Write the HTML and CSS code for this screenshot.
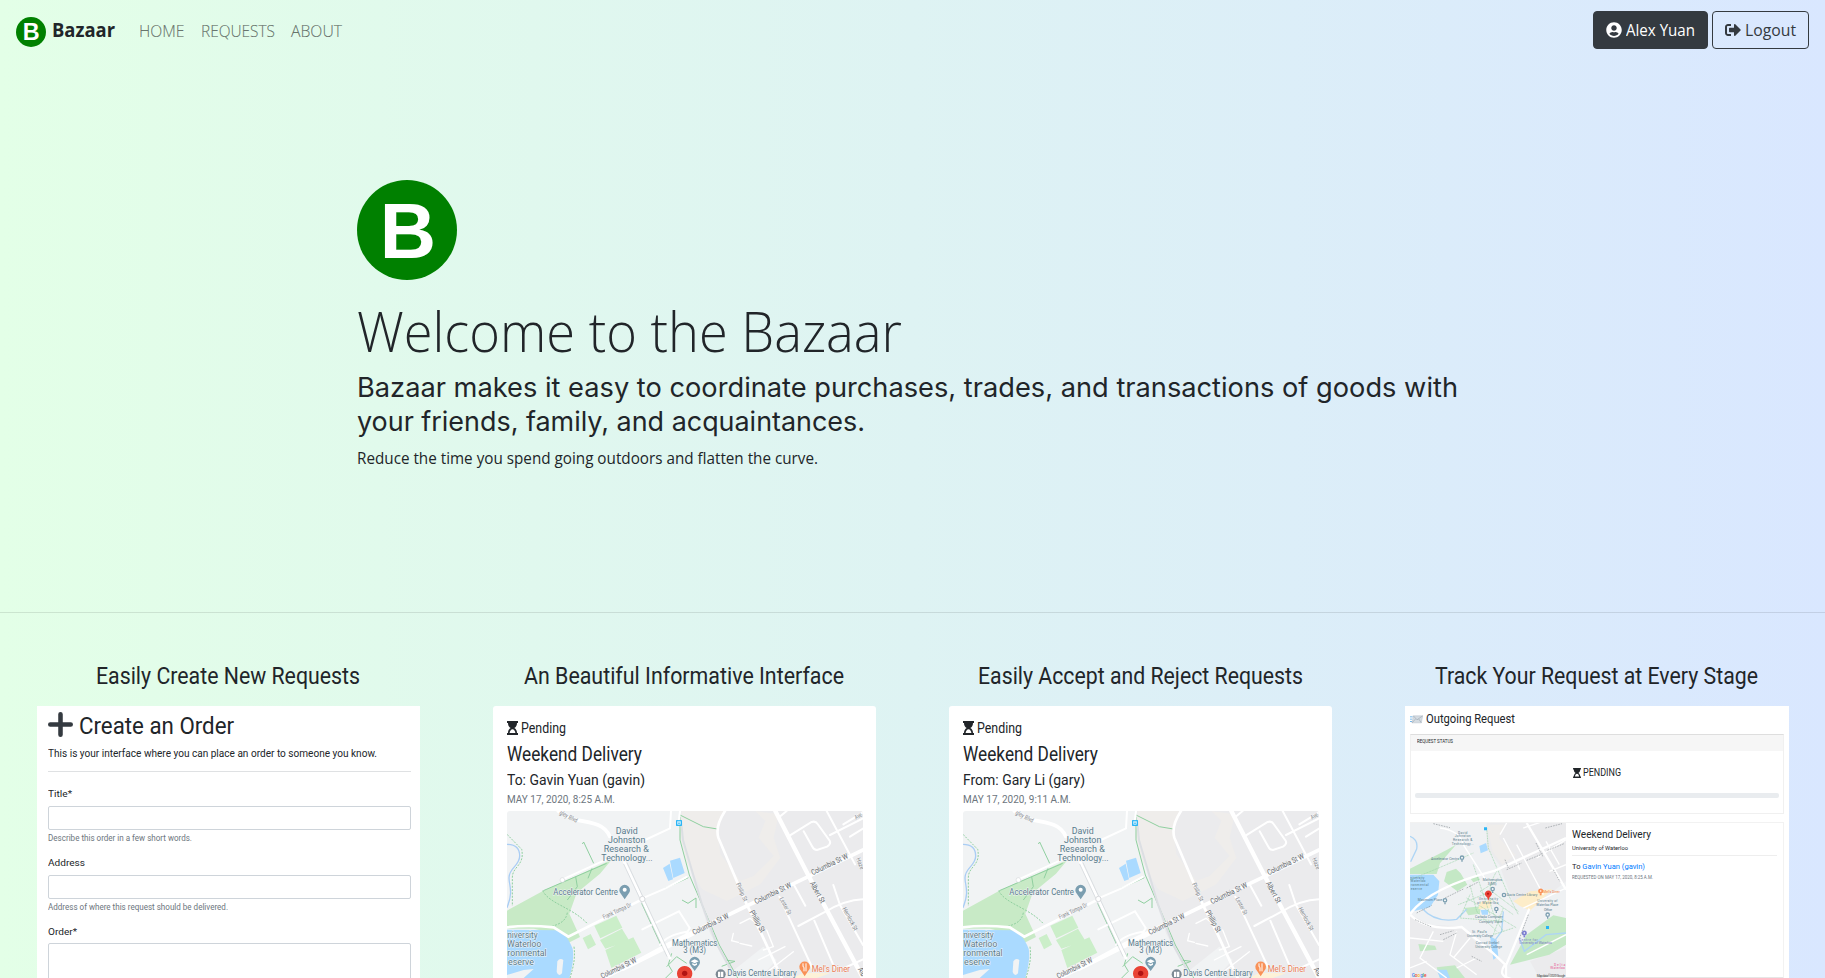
FILE: index.html
```html
<!DOCTYPE html>
<html lang="en">
<head>
<meta charset="utf-8">
<title>Bazaar</title>
<link rel="stylesheet" href="styles.css">
</head>
<body>
<nav class="navbar">
  <svg class="brand-logo" viewBox="0 0 100 100"><circle cx="50" cy="50" r="50" fill="green"/><text x="51" y="77" text-anchor="middle" class="logo-b">B</text></svg>
  <span class="brand"><span data-w="63">Bazaar</span></span>
  <a class="nav-link"><span data-w="45.500">HOME</span></a>
  <a class="nav-link"><span data-w="74">REQUESTS</span></a>
  <a class="nav-link"><span data-w="51">ABOUT</span></a>
  <div class="nav-actions">
    <a class="btn btn-dark"><svg class="btn-icon" viewBox="0 0 496 512"><path fill="currentColor" d="M248 8C111 8 0 119 0 256s111 248 248 248 248-111 248-248S385 8 248 8zm0 96c48.600 0 88 39.400 88 88s-39.400 88-88 88-88-39.400-88-88 39.400-88 88-88zm0 344c-58.700 0-111.300-26.600-146.500-68.200 18.800-35.400 55.600-59.800 98.500-59.800 2.400 0 4.800.4 7.100 1.100 13 4.200 26.600 6.900 40.900 6.900s28-2.700 40.900-6.900c2.300-.7 4.700-1.100 7.100-1.100 42.900 0 79.700 24.400 98.500 59.800C359.300 421.400 306.700 448 248 448z"/></svg><span data-w="69">Alex Yuan</span></a>
    <a class="btn btn-outline"><svg class="btn-icon" viewBox="0 0 512 512"><path fill="currentColor" d="M497 273L329 441c-15 15-41 4.500-41-17v-96H152c-13.300 0-24-10.700-24-24v-96c0-13.300 10.700-24 24-24h136V88c0-21.400 25.900-32 41-17l168 168c9.300 9.400 9.300 24.600 0 34zM192 436v-40c0-6.600-5.400-12-12-12H96c-17.700 0-32-14.300-32-32V160c0-17.700 14.300-32 32-32h84c6.600 0 12-5.400 12-12V76c0-6.600-5.400-12-12-12H96c-53 0-96 43-96 96v192c0 53 43 96 96 96h84c6.600 0 12-5.400 12-12z"/></svg><span data-w="51">Logout</span></a>
  </div>
</nav>

<header class="hero">
  <svg class="hero-logo" viewBox="0 0 100 100"><circle cx="50" cy="50" r="50" fill="green"/><text x="51" y="78" text-anchor="middle" class="logo-b">B</text></svg>
  <h1><span data-w="545">Welcome to the Bazaar</span></h1>
  <h2><span data-w="1101">Bazaar makes it easy to coordinate purchases, trades, and transactions of goods with</span><br><span data-w="508">your friends, family, and acquaintances.</span></h2>
  <p><span data-w="461">Reduce the time you spend going outdoors and flatten the curve.</span></p>
</header>

<main class="features">
  <section class="feature">
    <h3><span data-w="264">Easily Create New Requests</span></h3>
    <div class="shot form-shot">
      <div class="form-title"><svg class="plus" viewBox="0 0 22 22"><path d="M11 2v18M2 11h18" stroke="#343a40" stroke-width="4" stroke-linecap="round"/></svg><span data-w="155">Create an Order</span></div>
      <div class="form-sub"><span data-w="329">This is your interface where you can place an order to someone you know.</span></div>
      <div class="form-rule"></div>
      <div class="label"><span data-w="24">Title*</span></div>
      <div class="input"></div>
      <div class="help"><span data-w="144">Describe this order in a few short words.</span></div>
      <div class="label"><span data-w="37">Address</span></div>
      <div class="input"></div>
      <div class="help"><span data-w="180">Address of where this request should be delivered.</span></div>
      <div class="label"><span data-w="29">Order*</span></div>
      <div class="input area"></div>
    </div>
  </section>

  <section class="feature">
    <h3><span data-w="320">An Beautiful Informative Interface</span></h3>
    <div class="shot card-shot">
      <div class="status"><svg class="hourglass" viewBox="0 0 11 14"><path fill="#212529" d="M0 0h11v2h-1c0 2.500-1 4-2.700 5C9 8 10 9.500 10 12h1v2H0v-2h1c0-2.500 1-4 2.700-5C2 6 1 4.500 1 2H0z"/><path fill="#fff" d="M2.600 12c.3-2 1.300-3.800 2.900-3.800S8.100 10 8.400 12z"/></svg><span data-w="45">Pending</span></div>
      <div class="card-title"><span data-w="135">Weekend Delivery</span></div>
      <div class="person"><span data-w="138">To: Gavin Yuan (gavin)</span></div>
      <div class="date"><span data-w="108">MAY 17, 2020, 8:25 A.M.</span></div>
      <div class="map-slot">
        <svg class="map" id="map" viewBox="81 513 1068 501">
          <rect x="81" y="513" width="1068" height="501" fill="#f1f3f4"/>
          <path fill="#ebebed" d="M600 513h549v501H760L690 880 640 720 604 600z"/>
          <path fill="#efedeb" d="M606 513h125l-18 60 8 70 60 80 40-15 60-60-45-55 20-50-30-30 70 10-15 70 20 60-60 80-100 50-75-35-45-80-23-80z"/>
          <path fill="#f1f3f4" d="M690 900l60 100 100-80 40 40-50 54H740z"/>
          <path fill="#fdf2d8" d="M940 1014l30-16 80 2-40 14z"/>
          <path fill="#c8eac6" d="M81 812L190 752l130-58 75-35-35 42-70 58-22 62 32 70-40 20-38-30-60-15H81z"/>
          <path fill="#cbeec9" d="M343 857l66-30 18 36-66 32zM360 900l66-34 22 36-72 24zM376 930l84-38 24 46-90 46zM308 894l24-12 16 32-24 14z"/>
          <path fill="#aadaff" d="M81 869l145 2c25 5 40 25 52 55 5 20-2 65-10 88H81zM549 684l20-13 10 47-14 5zM570 662l30-9 14 46-34 15z"/>
          <path fill="#f1f3f4" d="M232 964q8-12 18-4l-4 40q-10 12-16-4zM81 1005l50-15 30-3-30 27H81z"/>
          <path fill="none" stroke="#aacdf4" stroke-width="4" d="M81 613c26 0 38 12 38 35 0 30-32 35-32 65 0 25 14 40-6 90"/>
          <g fill="none" stroke="#8fcf9f" stroke-width="3">
            <path stroke-dasharray="6 4" d="M81 583l44 45c10 50-28 50-28 85v85M188 752c20 40 90 50 135 100M262 818c-5 30-30 35-48 42M282 920c5 40-4 65-12 94"/>
            <path d="M190 752l190-82M262 780l30-40-5-30M324 715l12-30M341 670l-30-64-4 6M485 790l60 130M600 530v70l28 105 90 210 55 99M600 525l70 35 42 7M555 745l70-32M606 780l18 10 24-16v30M575 940l-10 34 12 20-20 20M735 960l30 4-40 15M560 980l30-30 30 20"/>
          </g>
          <path fill="none" stroke="#dcdfe3" stroke-width="6" d="M603 540l6 60 56 190 44 120 44 80"/>
          <g fill="none" stroke="#fff" stroke-linecap="round">
            <path stroke-width="11" d="M235 513l50 26c60 10 90 16 104 50M1149 630L980 712 800 798 570 910 460 970 370 1014"/>
            <path stroke-width="13" d="M640 880l-90 46-120 60M886 513l100 195 115 215 48 91"/>
            <path stroke-width="8" d="M430 660l55 115 85 180M735 513q-30 45-20 80l85 200 45 90 60 131M81 862q60-8 140 0l44 28 220-111"/>
            <path stroke-width="6" d="M248 718l145-66M485 776l70-30 65-35M495 600l75-35 3-52M600 513l-3 25M540 915q20-30 80-40M487 868l110-54 32 50-12 22M930 586l65-40q12-4 18 6l36 50q5 10-8 18l-30 10q-10 0-14-10l-26-46M1040 513l85 160M1050 585l99-50M955 858l80-42q60-36 114-38M898 770l102 220M942 735l34 62M1003 842l60 140M1060 735l20 60 69 120M1080 990l69-32M920 513l-22 18M1110 590l39-24M1090 553l59-36"/>
            <path stroke-width="4" d="M850 1005l90-70M835 960l80-40M780 850l30-15 10 8M860 870l20 50-30 10M760 880l-5 22 20 5M780 910l35 8"/>
          </g>
          <path fill="none" stroke="#cfd3d8" stroke-width="2" d="M431 672l130 278M441 668l130 278"/>
          <circle cx="487" cy="777" r="8" fill="#fff" stroke="#d8dadd" stroke-width="3"/>
          <circle cx="247" cy="720" r="7" fill="#fff" stroke="#d8dadd" stroke-width="2"/>
          <g class="street">
            <text transform="translate(237 522) rotate(27)" textLength="58" lengthAdjust="spacingAndGlyphs">gley Blvd</text>
            <text transform="translate(372 838) rotate(-25)" textLength="92" lengthAdjust="spacingAndGlyphs">Frank Tompa Dr</text>
            <text transform="translate(768 732) rotate(66)" textLength="58" lengthAdjust="spacingAndGlyphs">Phillip St</text>
            <text transform="translate(898 776) rotate(62)" textLength="56" lengthAdjust="spacingAndGlyphs">Lester St</text>
            <text transform="translate(1087 806) rotate(62)" textLength="76" lengthAdjust="spacingAndGlyphs">Hemlock St</text>
            <text transform="translate(1128 656) rotate(68)" textLength="36" lengthAdjust="spacingAndGlyphs">Haze</text>
            <text transform="translate(1128 539) rotate(-28)" textLength="22" lengthAdjust="spacingAndGlyphs">Ave</text>
          </g>
          <g class="street major">
            <text transform="translate(998 706) rotate(-26)" textLength="120" lengthAdjust="spacingAndGlyphs">Columbia St W</text>
            <text transform="translate(828 793) rotate(-26)" textLength="120" lengthAdjust="spacingAndGlyphs">Columbia St W</text>
            <text transform="translate(642 885) rotate(-26)" textLength="118" lengthAdjust="spacingAndGlyphs">Columbia St W</text>
            <text transform="translate(367 1016) rotate(-26)" textLength="116" lengthAdjust="spacingAndGlyphs">Columbia St W</text>
            <text transform="translate(808 816) rotate(61)" textLength="72" lengthAdjust="spacingAndGlyphs">Phillip St</text>
            <text transform="translate(989 730) rotate(61)" textLength="70" lengthAdjust="spacingAndGlyphs">Albert St</text>
            <text transform="translate(1133 988) rotate(61)" textLength="26" lengthAdjust="spacingAndGlyphs">Alb</text>
          </g>
          <g class="place" text-anchor="middle">
            <text x="440" y="581" textLength="66" lengthAdjust="spacingAndGlyphs">David</text>
            <text x="440" y="608" textLength="112" lengthAdjust="spacingAndGlyphs">Johnston</text>
            <text x="439" y="635" textLength="135" lengthAdjust="spacingAndGlyphs">Research &amp;</text>
            <text x="441" y="662" textLength="154" lengthAdjust="spacingAndGlyphs">Technology...</text>
          </g>
          <g class="place">
            <text x="220" y="765" textLength="194" lengthAdjust="spacingAndGlyphs">Accelerator Centre</text>
            <text x="82" y="895" textLength="91" lengthAdjust="spacingAndGlyphs">niversity</text>
            <text x="82" y="922" textLength="102" lengthAdjust="spacingAndGlyphs">Waterloo</text>
            <text x="82" y="949" textLength="118" lengthAdjust="spacingAndGlyphs">ronmental</text>
            <text x="84" y="976" textLength="78" lengthAdjust="spacingAndGlyphs">eserve</text>
            <text x="576" y="917" textLength="136" lengthAdjust="spacingAndGlyphs">Mathematics</text>
            <text x="610" y="940" textLength="68" lengthAdjust="spacingAndGlyphs">3 (M3)</text>
            <text x="742" y="1008" textLength="208" lengthAdjust="spacingAndGlyphs">Davis Centre Library</text>
            <text class="food" x="995" y="996" textLength="115" lengthAdjust="spacingAndGlyphs">Mel's Diner</text>
          </g>
          <path fill="#7b9eb0" d="M434 778l-11-16a16 16 0 1 1 22 0z"/><circle cx="434" cy="749" r="6" fill="#fff"/>
          <path fill="#7b9eb0" d="M644 993l-11-15a16 16 0 1 1 22 0z"/><path fill="#fff" d="M632 964l12-6 12 6-12 6zM637 969l7 4 7-4v5l-7 4-7-4z"/>
          <circle cx="722" cy="1003" r="15" fill="#7d8a94"/><path d="M714 995h7v16h-7zM723 995h7v16h-7z" fill="#fff"/>
          <path fill="#f99157" d="M974 1009l-12-18a16 16 0 1 1 24 0z"/><path d="M969 970v8q0 4 3 4v12M978 970v24" stroke="#fff" stroke-width="3" fill="none"/>
          <path fill="#e94335" d="M614 1060l-20-48a23 23 0 1 1 40 0z"/><circle cx="614" cy="1000" r="8" fill="#b11313"/>
          <rect x="588" y="540" width="18" height="18" rx="2" fill="#2bb5f5"/><path d="M593 544h8v9h-8zM593 548h8" stroke="#fff" stroke-width="2" fill="none"/>
        </svg>
      </div>
    </div>
  </section>

  <section class="feature">
    <h3><span data-w="325">Easily Accept and Reject Requests</span></h3>
    <div class="shot card-shot">
      <div class="status"><svg class="hourglass" viewBox="0 0 11 14"><path fill="#212529" d="M0 0h11v2h-1c0 2.500-1 4-2.700 5C9 8 10 9.500 10 12h1v2H0v-2h1c0-2.500 1-4 2.700-5C2 6 1 4.500 1 2H0z"/><path fill="#fff" d="M2.600 12c.3-2 1.300-3.800 2.900-3.800S8.100 10 8.400 12z"/></svg><span data-w="45">Pending</span></div>
      <div class="card-title"><span data-w="135">Weekend Delivery</span></div>
      <div class="person"><span data-w="122">From: Gary Li (gary)</span></div>
      <div class="date"><span data-w="108">MAY 17, 2020, 9:11 A.M.</span></div>
      <div class="map-slot" data-copy="map"></div>
    </div>
  </section>

  <section class="feature">
    <h3><span data-w="323">Track Your Request at Every Stage</span></h3>
    <div class="shot track-shot">
      <div class="track-title"><svg class="mail" viewBox="0 0 39 26"><path d="M0 5h8M0 12h6M0 19h6" stroke="#5aa9e6" stroke-width="2.500"/><path d="M10 2h28l-4 21H6z" fill="#d5dce2" stroke="#b4bfc8" stroke-width="1.500"/><path d="M10 2l11 12L38 2M6 23l11-12M34 23l-8-12" fill="none" stroke="#8e9ba6" stroke-width="1.500"/></svg><span data-w="89">Outgoing Request</span></div>
      <div class="panel">
        <div class="panel-head"><span data-w="36">REQUEST STATUS</span></div>
        <div class="panel-status"><svg class="hourglass" viewBox="0 0 11 14"><path fill="#212529" d="M0 0h11v2h-1c0 2.500-1 4-2.700 5C9 8 10 9.500 10 12h1v2H0v-2h1c0-2.500 1-4 2.700-5C2 6 1 4.500 1 2H0z"/><path fill="#fff" d="M2.600 12c.3-2 1.300-3.800 2.900-3.800S8.100 10 8.400 12z"/></svg><span data-w="38">PENDING</span></div>
        <div class="progress"></div>
      </div>
      <div class="detail">
        <svg class="mini-map" viewBox="60 545 468 465">
          <rect x="60" y="545" width="468" height="465" fill="#eff1f3"/>
          <path fill="#ebebed" d="M290 545h238v175l-100 80-60-20-40-110-38-50z"/>
          <path fill="#efedeb" d="M292 550h50l-15 40 50 50-40 30-30-40z"/>
          <path fill="#ebebed" d="M60 820l60 30 90 5 50 50 90 60v45H60zM420 960l108-40v90h-80z"/>
          <path fill="#c4e8c5" d="M60 682l110-56 28-16-48 56-10 32H60zM170 692l28-10 14 14 20 34-30 20-40-30zM360 970l50-90 80-58 38 8v80l-50 30-70 18zM85 908l50 5 5 12-50 5zM222 800l50-5-2 22-35 5zM140 978l55-6 30 38h-75zM240 710l22-10 8 15-20 8z"/>
          <path fill="#aadaff" d="M60 700h70l18 20-4 40-24 38-60 14zM268 614l20-9 6 22-22 9zM300 885l20 10 5 50-15 10zM140 985h30l10 25h-30zM272 806h22v14h-18z"/>
          <path fill="#fdedc9" d="M370 780l50-30 66-6-30 30-36 34-30-14zM270 782l35-5-5 24-35 2z"/>
          <g fill="none" stroke="#aed5f5" stroke-width="4"><path d="M60 585q25 10 20 38l-18 38M95 800q40 45 105 34l30-30M528 875l-60 5-65 50-15-40M340 810l-5 60-30 40"/></g>
          <g fill="none" stroke="#8fcf9f" stroke-width="2" stroke-dasharray="3 2"><path d="M290 560l5 60 60 140 30 60M240 730l20 80 60 60M320 720l-50 30 100 70M230 770l150 90M205 790l100-40 80 60M340 800l-30 80 60-20M250 670l50 150M60 715q100-40 190-80M320 690q-50 80 20 180M240 760l-30 70 130 10"/></g>
          <g fill="none" stroke="#fff">
            <path stroke-width="7" d="M60 818q60-80 255-130L528 590M60 820q50 50 155 37l90 75 43 40v38M348 972l70-170M410 545l118 200M345 970q-50 70 180 33"/>
            <path stroke-width="4" d="M150 560q60 8 70 50l70 110M340 590l50 95M330 580l20-35M440 650l88-55M400 560l60-20M380 610l80 150M130 870l-40 80 80 60M200 870l-20 70 80 60M60 890l100 10M110 960l-50 20M240 890l-50 60M260 950l-60 30M468 600l40 70M478 690l50-20M400 800l128-60M410 940l118-60"/>
          </g>
          <g fill="none" stroke="#8e9499" stroke-width="2" stroke-dasharray="5 3"><path d="M80 815l45-23M165 770l55-27M230 740l35-18M350 685l45-20M410 657l50-20M472 627l50-20M438 605l20 40M490 685l20 36M345 655l10 25M415 820l-28 75M75 835l50 22M150 880l40-12M160 895l40-20M245 945l30 15M130 547l50 12M466 560l50-13"/></g>
          <g class="mini-label" text-anchor="middle">
            <text x="218" y="577" textLength="28">David</text><text x="218" y="588" textLength="48">Johnston</text><text x="218" y="600" textLength="58">Research &amp;</text><text x="218" y="612" textLength="66">Technology...</text>
            <text x="165" y="655" textLength="84">Accelerator Centre</text>
            <text x="82" y="712" textLength="42">niversity</text><text x="84" y="723" textLength="45">Waterloo</text><text x="89" y="735" textLength="54">ronmental</text><text x="79" y="746" textLength="34">eserve</text>
            <text x="120" y="780" textLength="74">Maximum Place</text>
            <text x="307" y="720" textLength="58">Mathematics</text><text x="306" y="731" textLength="26">3 (M3)</text>
            <text x="396" y="763" textLength="92">Davis Centre Library</text>
            <text x="295" y="777" textLength="58">University</text><text x="293" y="789" textLength="64">of Waterloo</text>
            <text x="297" y="829" textLength="84">Canada Computer</text><text x="302" y="845" textLength="70">Company Store</text>
            <text x="472" y="782" textLength="60">University of</text><text x="472" y="793" textLength="66">Waterloo Place</text><text x="474" y="808" textLength="24">Office</text>
            <text x="268" y="875" textLength="44">St. Paul's</text><text x="270" y="886" textLength="78">University College</text>
            <text x="292" y="908" textLength="70">Conrad Grebel</text><text x="296" y="919" textLength="80">University College</text>
            <text x="485" y="755" textLength="50" fill="#f07b3c">Mel's Diner</text>
            <text x="415" y="898" textLength="56" fill="#7577c2">Centre for</text><text x="437" y="909" textLength="98" fill="#7577c2">University of Waterloo</text>
            <text x="509" y="974" textLength="34" fill="#e75590">Delta</text><text x="503" y="984" textLength="44" fill="#e75590">Waterloo</text>
            <text x="483" y="1006" textLength="86" fill="#444">Map data ©2020 Google</text>
          </g>
          <text class="google" x="65" y="1006"><tspan fill="#4285f4">G</tspan><tspan fill="#ea4335">o</tspan><tspan fill="#fbbc05">o</tspan><tspan fill="#4285f4">g</tspan><tspan fill="#34a853">l</tspan><tspan fill="#ea4335">e</tspan></text>
          <g fill="#f7f9fa" stroke="#7b9eb0" stroke-width="4"><circle cx="216" cy="649" r="5"/><path d="M216 656v5"/><circle cx="308" cy="743" r="5"/><path d="M308 750v5"/><circle cx="165" cy="777" r="5"/><path d="M165 784v5"/><circle cx="342" cy="761" r="5"/><circle cx="319" cy="803" r="5"/><path d="M319 810v5"/><circle cx="473" cy="820" r="5"/><path d="M473 827v5"/></g>
          <g fill="#fff" stroke-width="5"><circle cx="452" cy="749" r="5" stroke="#f99157"/><path d="M452 756v6" stroke="#f99157"/><circle cx="403" cy="875" r="5" stroke="#7c7fd0"/><path d="M403 882v6" stroke="#7c7fd0"/></g>
          <path fill="#e94335" d="M295 778q-2-10-7-13a10 10 0 1 1 14 0q-5 3-7 13z"/><circle cx="294" cy="757" r="3" fill="#b11313"/>
          <path fill="#2bb5f5" d="M282 558h9v9h-9zM468 854h9v9h-9z"/>
        </svg>
        <div class="detail-text">
          <div class="d-title"><span data-w="79">Weekend Delivery</span></div>
          <div class="d-place"><span data-w="56">University of Waterloo</span></div>
          <div class="d-rule"></div>
          <div class="d-to"><span data-w="73">To <a>Gavin Yuan (gavin)</a></span></div>
          <div class="d-date"><span data-w="81">REQUESTED ON MAY 17, 2020, 8:25 A.M.</span></div>
        </div>
      </div>
    </div>
  </section>
</main>
<script src="script.js"></script>
</body>
</html>
```
FILE: styles.css
```css
* { box-sizing: border-box; }
body {
  margin: 0;
  height: 978px;
  overflow: hidden;
  background: linear-gradient(to right, #e3ffe7 0%, #d9e7ff 100%);
  color: #212529;
  font-family: "Open Sans", "Noto Sans", sans-serif;
  font-size: 16px;
  line-height: 24px;
}
svg { display: block; flex: none; }
[data-w] { display: inline-block; white-space: nowrap; transform-origin: 0 50%; }
.logo-b { font: bold 78px "Liberation Sans", Arial, sans-serif; fill: #fff; }

.navbar { display: flex; align-items: center; height: 60px; padding: 0 16px; }
.brand-logo { width: 30px; height: 30px; margin-top: 4px; }
.brand { margin: 0 16px 0 6px; font-size: 20px; font-weight: 700; line-height: 30px; }
.nav-link { padding: 1px 8px 0; color: rgba(0, 0, 0, .5); font-weight: 300; -webkit-text-stroke: .2px; }
.nav-actions { display: flex; gap: 4px; margin-left: auto; }
.btn { display: flex; align-items: center; gap: 4px; height: 38px; padding: 0 12px; border: 1px solid #343a40; border-radius: 4px; color: #343a40; }
.btn-dark { background: #343a40; color: #fff; }
.btn-icon { width: 16px; height: 16px; }

.hero { width: 1111px; height: 552px; margin: 0 auto; padding-top: 120px; }
.hero-logo { width: 100px; height: 100px; }
h1 { margin: 17px 0 0; font-size: 56px; font-weight: 300; line-height: 67px; }
h2 { margin: 7px 0 0; font-family: Inter, sans-serif; font-size: 27px; font-weight: 400; line-height: 34px; }
.hero p { margin: 7px 0 0; }

.features { display: grid; grid-template-columns: repeat(4, 1fr); height: 366px; border-top: 1px solid rgba(0, 0, 0, .1); font-family: Roboto, sans-serif; }
.feature { padding: 48px 8% 0; min-width: 0; }
h3 { margin: 0 -30px 15px; font-size: 24px; font-weight: 400; line-height: 30px; text-align: center; }
.shot { height: 290px; overflow: hidden; background: #fff; }

.form-shot { padding: 5px 9px 0 11px; }
.form-title { display: flex; align-items: center; gap: 6px; font-size: 24px; line-height: 30px; }
.plus { width: 25px; height: 25px; margin-top: -3px; }
.form-sub { margin-top: 6px; font-size: 10px; line-height: 13px; }
.form-rule { height: 1px; margin: 11px 0 15px; background: #dfe1e3; }
.label { margin-bottom: 6px; font-size: 9.800px; line-height: 13px; }
.input { height: 24px; border: 1px solid #ced4da; border-radius: 2px; }
.area { height: 60px; margin-top: -1px; }
.help { margin: 2px 0 12px; color: #6c757d; font-size: 8.500px; line-height: 12px; }

.card-shot { padding: 12px 13px 0 14px; border-radius: 3px 3px 0 0; }
.status { display: flex; align-items: center; gap: 3px; font-size: 14px; line-height: 20px; }
.hourglass { width: 11px; height: 14px; }
.card-title { margin-top: 4px; font-size: 20px; line-height: 24px; }
.person { margin-top: 4px; font-size: 14px; line-height: 20px; }
.date { margin-top: 2px; color: #6c757d; font-size: 11.500px; line-height: 14px; }
.map-slot { margin-top: 5px; height: 167px; border-radius: 3px 3px 0 0; overflow: hidden; }
.map { width: 356px; height: 167px; }
.street { font-size: 19px; fill: #82868b; }
.major { font-size: 23px; fill: #62666b; }
.street text, .place text { paint-order: stroke; stroke: #f4f5f6; stroke-width: 3px; }
.place { font-size: 26px; fill: #587b8c; }
.place .food { fill: #ec7c55; }

.track-shot { padding: 5px 5px 0; }
.track-title { display: flex; align-items: center; gap: 3px; font-size: 13px; line-height: 16px; }
.mail { width: 13px; height: 9px; }
.panel { height: 80px; margin-top: 7px; border: 1px solid #f0f0f0; border-top-color: #dedede; }
.panel-head { height: 16px; padding: 2px 6px; background: #f6f6f6; font-size: 5px; line-height: 9px; }
.panel-status { display: flex; align-items: center; justify-content: center; gap: 2px; margin-top: 14px; font-size: 11px; line-height: 16px; }
.panel-status .hourglass { width: 8px; height: 10px; }
.progress { height: 5px; margin: 12px 4px 0; border-radius: 2px; background: #e9ecef; }
.detail { display: flex; height: 157px; margin-top: 8px; border: solid #f2f2f2; border-width: 1px 1px 2px 0; border-bottom-color: #e6e6e6; }
.mini-map { width: 156px; height: 155px; }
.mini-label { font-size: 10px; fill: #587b8c; }
.google { font-size: 14px; font-weight: 500; }
.detail-text { flex: 1; padding: 5px 6px 0; }
.d-title { font-size: 11px; line-height: 14px; }
.d-place { margin-top: 2px; font-size: 6px; line-height: 8px; }
.d-rule { height: 1px; margin: 3px 0 6px; background: #eee; }
.d-to { font-size: 8px; line-height: 10px; }
.d-to a { color: #007bff; }
.d-date { margin-top: 2px; color: #6c757d; font-size: 5px; line-height: 6px; }
```
FILE: script.js
```js
// Reuse the first map illustration in the other request card.
document.querySelectorAll('[data-copy]').forEach(function (slot) {
  var map = document.getElementById(slot.dataset.copy).cloneNode(true);
  map.removeAttribute('id');
  slot.appendChild(map);
});

// Condense or widen each label to its intended measure.
document.querySelectorAll('[data-w]').forEach(function (el) {
  var natural = el.getBoundingClientRect().width;
  var wanted = Number(el.dataset.w);
  el.style.transform = 'scaleX(' + wanted / natural + ')';
  el.style.marginRight = (wanted - natural) + 'px';
});
```
